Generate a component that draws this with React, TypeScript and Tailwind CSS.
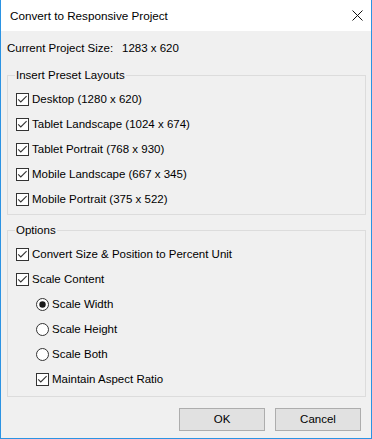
import React from "react";

const font = { fontFamily: '"Liberation Sans", Arial, sans-serif' };

function CheckBox({ label, indent = false }: { label: string; indent?: boolean }) {
  return (
    <div className={`flex h-[13px] items-center gap-[3px] ${indent ? "pl-[20px]" : ""}`}>
      <svg width="13" height="13" viewBox="0 0 13 13" className="shrink-0">
        <rect x="0.5" y="0.5" width="12" height="12" fill="#fff" stroke="#333" />
        <polyline points="2.2,6.3 4.8,9 10.6,3.2" fill="none" stroke="#333" strokeWidth="1.1" />
      </svg>
      <span className="text-[11.5px] leading-none text-black">{label}</span>
    </div>
  );
}

function Radio({ label, checked = false }: { label: string; checked?: boolean }) {
  return (
    <div className="flex h-[13px] items-center gap-[3px] pl-[20px]">
      <svg width="13" height="13" viewBox="0 0 13 13" className="shrink-0">
        <circle cx="6.5" cy="6.5" r="6" fill="#fff" stroke="#333" />
        {checked && <circle cx="6.5" cy="6.5" r="3.2" fill="#1a1a1a" />}
      </svg>
      <span className="text-[11.5px] leading-none text-black">{label}</span>
    </div>
  );
}

function GroupBox({
  title,
  pb,
  children,
}: {
  title: string;
  pb: string;
  children: React.ReactNode;
}) {
  return (
    <div className={`relative flex flex-col gap-[12px] border border-[#dcdcdc] pl-[8px] pt-[17px] ${pb}`}>
      <span className="absolute -top-[8px] left-[7px] bg-[#f0f0f0] px-[1px] text-[11.5px] leading-[14px] text-black">
        {title}
      </span>
      {children}
    </div>
  );
}

export default function App() {
  return (
    <div
      className="flex h-[439px] w-[372px] flex-col border-x border-b border-[#2b93e3] bg-white"
      style={font}
    >
      <div className="flex h-[31px] shrink-0 items-center justify-between bg-white pl-[9px] pr-[8px]">
        <span className="text-[11.7px] text-black">Convert to Responsive Project</span>
        <svg width="11" height="11" viewBox="0 0 11 11">
          <path d="M0.5 0.5 L10.5 10.5 M10.5 0.5 L0.5 10.5" stroke="#111" strokeWidth="1" />
        </svg>
      </div>
      <div className="flex flex-1 flex-col bg-[#f0f0f0] pl-[6px] pr-[5px] pt-[10px]">
        <div className="flex h-[16px] items-center text-[11.5px] text-black">
          <span className="w-[115px]">Current Project Size:</span>
          <span>1283 x 620</span>
        </div>
        <div className="mt-[18px]">
          <GroupBox title="Insert Preset Layouts" pb="pb-[8px]">
            <CheckBox label="Desktop (1280 x 620)" />
            <CheckBox label="Tablet Landscape (1024 x 674)" />
            <CheckBox label="Tablet Portrait (768 x 930)" />
            <CheckBox label="Mobile Landscape (667 x 345)" />
            <CheckBox label="Mobile Portrait (375 x 522)" />
          </GroupBox>
        </div>
        <div className="mt-[15px]">
          <GroupBox title="Options" pb="pb-[10px]">
            <CheckBox label="Convert Size & Position to Percent Unit" />
            <CheckBox label="Scale Content" />
            <Radio label="Scale Width" checked />
            <Radio label="Scale Height" />
            <Radio label="Scale Both" />
            <CheckBox label="Maintain Aspect Ratio" indent />
          </GroupBox>
        </div>
        <div className="mt-[11px] flex justify-end gap-[10px] pr-[5px]">
          <button className="h-[23px] w-[86px] border border-[#adadad] bg-[#e1e1e1] text-[11.5px] text-black">
            OK
          </button>
          <button className="h-[23px] w-[86px] border border-[#adadad] bg-[#e1e1e1] text-[11.5px] text-black">
            Cancel
          </button>
        </div>
      </div>
    </div>
  );
}
